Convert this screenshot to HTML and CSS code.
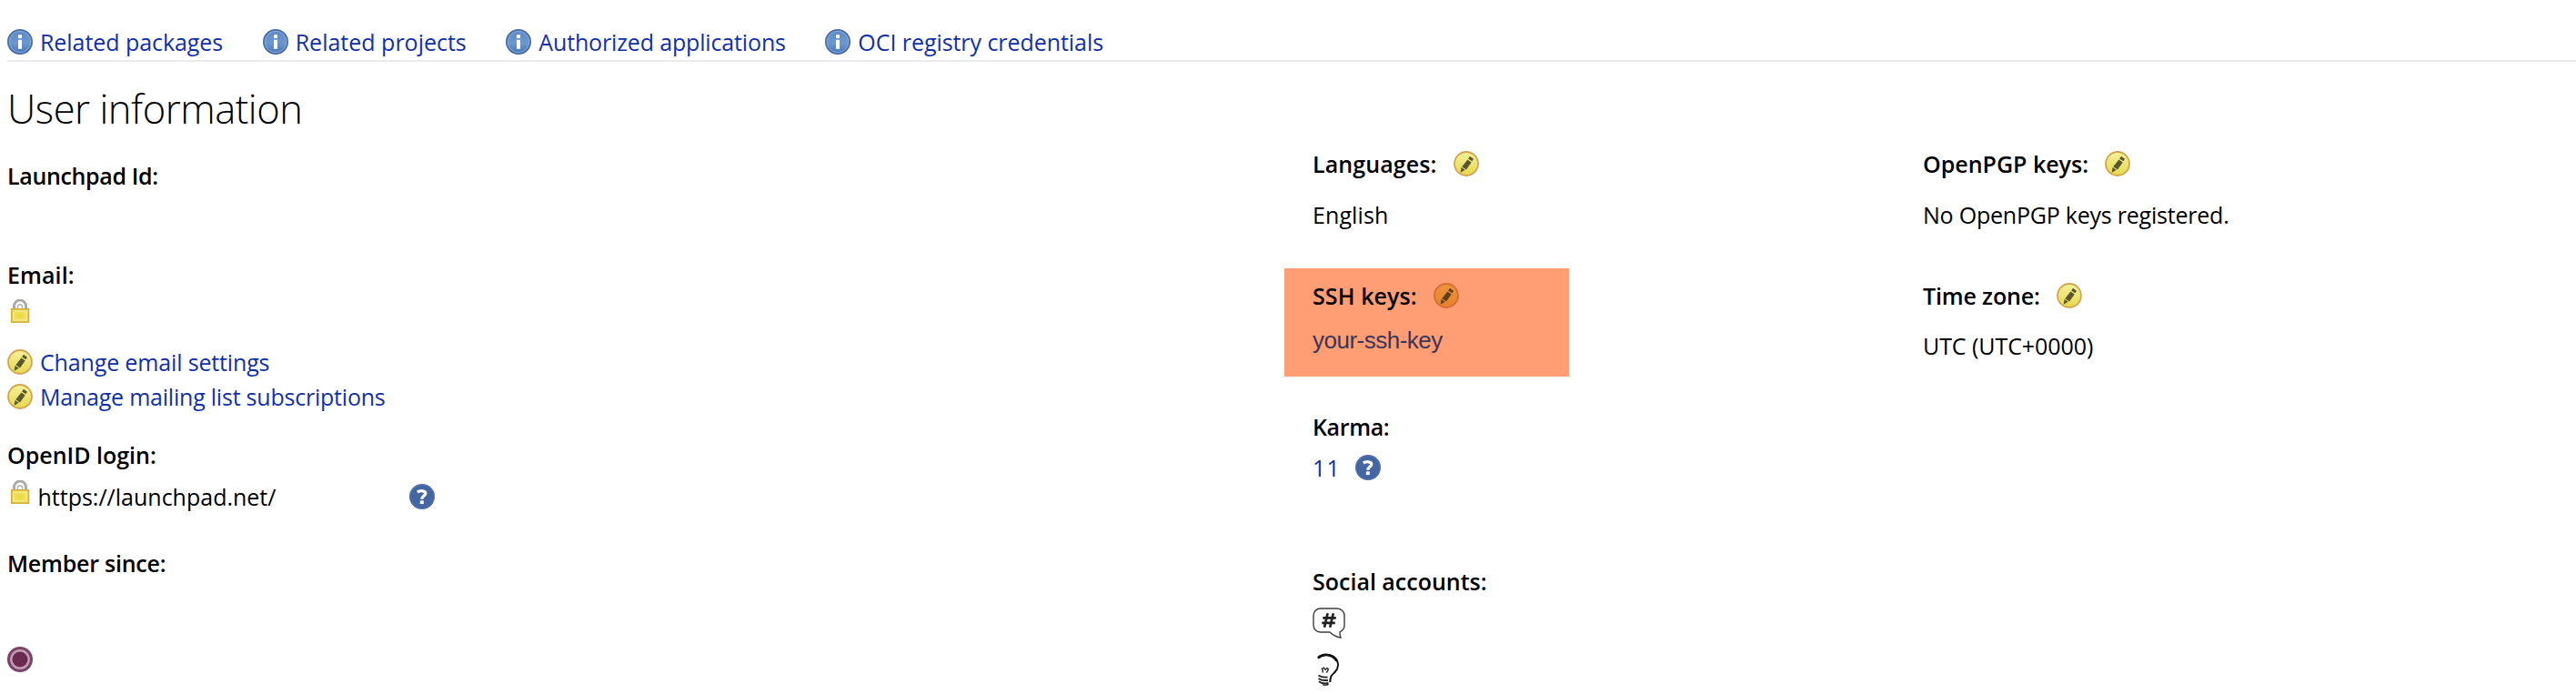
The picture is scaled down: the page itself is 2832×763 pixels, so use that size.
FILE: index.html
```html
<!DOCTYPE html>
<html lang="en">
<head>
<meta charset="utf-8">
<title>User information</title>
<link rel="stylesheet" href="styles.css">
</head>
<body>
<svg class="defs" width="0" height="0" aria-hidden="true">
  <defs>
    <linearGradient id="g-info" x1="0" y1="0" x2="0" y2="1"><stop offset="0" stop-color="#5d88c4"/><stop offset=".55" stop-color="#6c98cf"/><stop offset="1" stop-color="#4475b8"/></linearGradient>
    <linearGradient id="g-edit" x1="0" y1="0" x2="0" y2="1"><stop offset="0" stop-color="#f4f29a"/><stop offset="1" stop-color="#e6d84e"/></linearGradient>
    <linearGradient id="g-hot" x1="0" y1="0" x2="0" y2="1"><stop offset="0" stop-color="#ee9440"/><stop offset="1" stop-color="#e5822a"/></linearGradient>
    <radialGradient id="g-lock"><stop offset="0" stop-color="#ecd634"/><stop offset="1" stop-color="#efe05c"/></radialGradient>
  </defs>
  <symbol id="info" viewBox="0 0 28 28">
    <circle cx="14" cy="14" r="13.2" fill="url(#g-info)" stroke="#4a6ba3" stroke-width="1.6"/>
    <circle cx="14" cy="14" r="11.6" fill="none" stroke="#86a8d8" stroke-width="1"/>
    <path d="M12 6.3h4V10h-4zM12 11.8h4v10h-4z" fill="#fff"/>
  </symbol>
  <symbol id="edit" viewBox="0 0 28 28">
    <circle cx="14" cy="14" r="13" fill="url(#g-edit)" stroke="#d6a451" stroke-width="1.8"/>
    <path d="M18 5.8l4 2.900-1.600 2.600-4.300-2.900zM15.400 9.500l4.300 2.900-5.700 8-4.700-3.100zM8.500 18l4.200 2.800-5 3z" fill="#5a5630"/>
  </symbol>
  <symbol id="edit-hot" viewBox="0 0 28 28">
    <circle cx="14" cy="14" r="13" fill="url(#g-hot)" stroke="#d96c33" stroke-width="1.8"/>
    <path d="M18 5.8l4 2.900-1.600 2.600-4.300-2.900zM15.400 9.500l4.300 2.900-5.700 8-4.700-3.100zM8.500 18l4.200 2.800-5 3z" fill="#60401c"/>
  </symbol>
  <symbol id="help" viewBox="0 0 28 28">
    <circle cx="14" cy="14" r="13.3" fill="#4466a3" stroke="#5272aa" stroke-width="1.4"/>
    <path d="M8.800 9c3.800-2.200 9-1.600 9 1.500 0 2.500-4 2.700-4 6.200" fill="none" stroke="#fff" stroke-width="3.300"/>
    <path d="M11.800 18.400h4v3.700h-4z" fill="#fff"/>
  </symbol>
  <symbol id="lock" viewBox="0 0 22 27">
    <path d="M4.500 11V7.500a6.500 6.500 0 0 1 13 0V11" fill="none" stroke="#a9aba9" stroke-width="2.900"/>
    <path d="M8.400 11V8.400a2.600 2.600 0 0 1 5.200 0V11" fill="none" stroke="#b5b7b5" stroke-width="1.600"/>
    <path d="M1.800 10.900h18.600v14.300H1.800z" fill="#f3e67a" stroke="#d6b03c" stroke-width="1.800"/>
    <path d="M5 14h12.200v8H5z" fill="url(#g-lock)"/>
  </symbol>
  <symbol id="member" viewBox="0 0 28 28">
    <circle cx="14" cy="14" r="14" fill="#7d4267"/>
    <circle cx="14" cy="14" r="9.700" fill="#6b2a50" stroke="#c3a0b5" stroke-width="2.400"/>
  </symbol>
  <symbol id="chat" viewBox="0 0 36 34">
    <path d="M8.500 1H27a8 8 0 0 1 8 8v10.500c0 3.500-2 6-5 7.300-.3 2.200.3 4.200 1 6.200-4.500-.7-8.800-2.800-12-6H8.500A7.500 7.500 0 0 1 1 19.500V8.500A7.500 7.500 0 0 1 8.500 1z" fill="#fff" stroke="#3c3c3c" stroke-width="1.400"/>
    <path d="M16.600 6.300L13 21.700M22.800 6.300l-3.600 15.400M11.300 11.400h14.500M10.300 16.800h14.500" fill="none" stroke="#222" stroke-width="2.700"/>
  </symbol>
  <symbol id="bulb" viewBox="0 0 25 36">
    <path d="M1 5.800C6.500.8 15 .8 19.500 5.200c5 5.300 4.200 11.300 0 15.800-3.200 3.300-5.300 4-5.200 11" fill="none" stroke="#111" stroke-width="2"/>
    <path d="M1 5.300C4.500 2.200 10 1.500 14 2.600c3.500 1 6 3.300 7.500 6" fill="none" stroke="#111" stroke-width="2.700"/>
    <path d="M6.500 21.500l-1-4.300 2-1 1.500 2 2-1.800 1.400 1.200-2 4.200" fill="none" stroke="#333" stroke-width="1.500"/>
    <path d="M1.500 24.500c3 2 6 2.500 10 2M1.500 28c3 1.900 7 2.400 10.500 1.700M1.800 31.300c3 2.200 6.800 2.600 10.700 1.700" fill="none" stroke="#222" stroke-width="1.900"/>
    <path d="M6 34.600c2.500.9 4.500.7 6.500-.3" fill="none" stroke="#222" stroke-width="1.400"/>
  </symbol>
</svg>

<nav class="menu">
  <a class="link"><svg class="icon"><use href="#info"/></svg><span class="t0">Related packages</span></a>
  <a class="link"><svg class="icon"><use href="#info"/></svg><span>Related projects</span></a>
  <a class="link"><svg class="icon"><use href="#info"/></svg><span class="t1">Authorized applications</span></a>
  <a class="link"><svg class="icon"><use href="#info"/></svg><span class="t0">OCI registry credentials</span></a>
</nav>

<main>
  <section class="account">
    <h1>User information</h1>
    <h2 class="t3">Launchpad Id:</h2>
    <h2 class="email w1">Email:</h2>
    <svg class="lock lock-row"><use href="#lock"/></svg>
    <a class="link change"><svg class="icon"><use href="#edit"/></svg><span class="t1">Change email settings</span></a>
    <a class="link manage"><svg class="icon"><use href="#edit"/></svg><span class="t2">Manage mailing list subscriptions</span></a>
    <h2 class="openid">OpenID login:</h2>
    <div class="login"><svg class="lock"><use href="#lock"/></svg><span class="url">https://launchpad.net/</span><svg class="icon"><use href="#help"/></svg></div>
    <h2 class="since t2">Member since:</h2>
    <svg class="icon badge"><use href="#member"/></svg>
  </section>

  <section class="profile">
    <div class="row"><h2 class="w1">Languages:</h2><svg class="icon"><use href="#edit"/></svg></div>
    <p class="value w1">English</p>
    <div class="highlight">
      <div class="row"><h2 class="w1">SSH keys:</h2><svg class="icon"><use href="#edit-hot"/></svg></div>
      <p class="key">your-ssh-key</p>
    </div>
    <h2 class="karma t3">Karma:</h2>
    <div class="score"><a class="points">11</a><svg class="icon"><use href="#help"/></svg></div>
    <h2 class="social">Social accounts:</h2>
    <svg class="chat"><use href="#chat"/></svg>
    <svg class="bulb"><use href="#bulb"/></svg>
  </section>

  <section class="keys">
    <div class="row"><h2>OpenPGP keys:</h2><svg class="icon"><use href="#edit"/></svg></div>
    <p class="value t2">No OpenPGP keys registered.</p>
    <div class="row zone"><h2 class="t1">Time zone:</h2><svg class="icon"><use href="#edit"/></svg></div>
    <p class="utc t0">UTC (UTC+0000)</p>
  </section>
</main>
</body>
</html>
```
FILE: styles.css
```css
* { box-sizing: border-box; }
body {
  margin: 0;
  padding: 29px 0 0 8px;
  background: #fff;
  color: #000;
  font: 25px/34px "Open Sans", "Noto Sans", sans-serif;
}
h1, h2, p { margin: 0; }
svg { display: block; flex: none; }
.defs { position: absolute; }
.icon { width: 28px; height: 28px; }
.lock { width: 22px; height: 27px; margin-left: 3px; }

/* tracking */
.t0 { letter-spacing: -.06px; }
.t1 { letter-spacing: -.15px; }
.t2 { letter-spacing: -.22px; }
.t3 { letter-spacing: -.35px; }
.w1 { letter-spacing: .1px; }

.menu {
  display: flex;
  gap: 43.5px;
  height: 39px;
  border-bottom: 2px solid #ebebeb;
}
.link { display: flex; gap: 8px; height: 34px; color: #1130a8; white-space: nowrap; }
.link .icon { margin-top: 3px; }

main { display: grid; grid-template-columns: 1404px 702px 1fr; }
section { display: flex; flex-direction: column; }
h2 { font-size: 25px; line-height: 34px; font-weight: 600; }

h1 {
  height: 60px;
  margin: 22px 0 26px;
  font-size: 43.5px;
  line-height: 60px;
  font-weight: 300;
  letter-spacing: -.45px;
}
.email { margin-top: 75px; }
.lock-row { margin-top: 10px; }
.change { margin-top: 25px; }
.manage { margin-top: 4px; }
.openid { margin-top: 30px; }
.login { display: flex; margin-top: 11px; height: 35px; line-height: 36px; }
.login .url { margin-left: 8.5px; width: 408.5px; }
.login .icon { margin-top: 4px; }
.since { margin-top: 39px; }
.badge { margin-top: 75px; }

.profile { padding: 95px 0 0 31px; }
.keys { padding-top: 95px; }
.row { display: flex; gap: 18px; height: 34px; }
.row .icon { margin-top: 3px; }
.value { margin-top: 22px; }
.highlight {
  width: 313px;
  height: 119px;
  margin: 42px 0 0 -31px;
  padding: 13px 0 0 31px;
  background: #ff9e75;
}
.key {
  margin-top: 15px;
  color: #3c3556;
  font: 26px/35px "Liberation Sans", Arial, sans-serif;
  letter-spacing: -.5px;
}
.karma { margin-top: 38px; }
.score { display: flex; height: 34px; margin-top: 11px; }
.points { width: 47px; color: #1130a8; letter-spacing: 1.1px; }
.score .icon { margin-top: 3px; }
.social { margin-top: 91px; }
.chat { width: 36px; height: 34px; margin-top: 12px; }
.bulb { width: 25px; height: 36px; margin: 16px 0 0 5px; }
.zone { margin-top: 55px; }
.utc { margin-top: 21px; }
```
